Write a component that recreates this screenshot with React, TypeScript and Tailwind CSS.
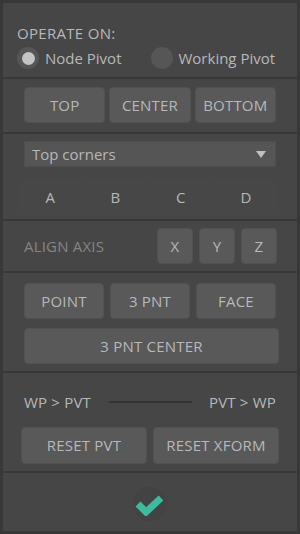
import React from "react";

function Btn({ label, className = "" }: { label: string; className?: string }) {
  return (
    <div
      className={`flex items-center justify-center rounded-[4px] bg-[#595959] border border-[#515151] text-[15px] text-[#b6b8ba] tracking-[0.2px] ${className}`}
    >
      {label}
    </div>
  );
}

function Radio({ label, checked }: { label: string; checked?: boolean }) {
  return (
    <div className="flex items-center gap-[6px]">
      <div className="w-[22px] h-[22px] rounded-full bg-[#565656] flex items-center justify-center">
        {checked && <div className="w-[13px] h-[13px] rounded-full bg-[#c4c4c4]" />}
      </div>
      <span className="text-[15px] text-[#b6b8ba]">{label}</span>
    </div>
  );
}

export default function App() {
  return (
    <div
      className="w-[300px] h-[534px] bg-[#383838] p-[3px] flex flex-col gap-[2px] select-none"
      style={{ fontFamily: '"Open Sans", "Liberation Sans", sans-serif' }}
    >
      {/* operate on */}
      <div className="h-[74px] bg-[#464646] px-[14px] pt-[20px]">
        <div className="text-[15px] leading-[20px] text-[#b6b8ba] tracking-[0.3px]">OPERATE ON:</div>
        <div className="flex items-center gap-[29px] mt-[4px]">
          <Radio label="Node Pivot" checked />
          <Radio label="Working Pivot" />
        </div>
      </div>

      {/* top/center/bottom */}
      <div className="h-[53px] bg-[#464646] px-[21px] pt-[8px] flex gap-[4px]">
        <Btn label="TOP" className="w-[82px] h-[36px]" />
        <Btn label="CENTER" className="w-[82px] h-[36px]" />
        <Btn label="BOTTOM" className="w-[82px] h-[36px]" />
      </div>

      {/* corners */}
      <div className="h-[85px] bg-[#464646] px-[21px] pt-[7px]">
        <div className="h-[26px] bg-[#555555] border border-[#4e4e4e] flex items-center justify-between pl-[7px] pr-[9px]">
          <span className="text-[15px] text-[#b6b8ba]">Top corners</span>
          <svg width="10" height="7" viewBox="0 0 10 7">
            <polygon points="0,0 10,0 5,7" fill="#c0c0c0" />
          </svg>
        </div>
        <div className="grid grid-cols-4 mt-[12px] w-[260px] -ml-[6px] gap-[1px]">
          {["A", "B", "C", "D"].map((l) => (
            <div key={l} className="h-[36px] flex items-center justify-center text-[15px] text-[#b6b8ba] bg-[#474747]">
              {l}
            </div>
          ))}
        </div>
      </div>

      {/* align axis */}
      <div className="h-[50px] bg-[#464646] pl-[21px] pr-[20px] flex items-center justify-between">
        <span className="text-[15px] text-[#858585] tracking-[0.2px]">ALIGN AXIS</span>
        <div className="flex gap-[6px]">
          <Btn label="X" className="w-[36px] h-[36px]" />
          <Btn label="Y" className="w-[36px] h-[36px]" />
          <Btn label="Z" className="w-[36px] h-[36px]" />
        </div>
      </div>

      {/* point modes */}
      <div className="h-[98px] bg-[#464646] px-[21px] pt-[10px] flex flex-col gap-[9px]">
        <div className="flex gap-[6px]">
          <Btn label="POINT" className="w-[81px] h-[36px]" />
          <Btn label="3 PNT" className="w-[81px] h-[36px]" />
          <Btn label="FACE" className="w-[81px] h-[36px]" />
        </div>
        <Btn label="3 PNT CENTER" className="w-[255px] h-[36px]" />
      </div>

      {/* wp / pvt */}
      <div className="h-[98px] bg-[#464646] px-[18px] pt-[18px]">
        <div className="flex items-center justify-between pl-[3px] pr-[3px] h-[22px]">
          <span className="text-[15px] text-[#b6b8ba] tracking-[0.2px]">WP &gt; PVT</span>
          <div className="w-[83px] h-[2px] bg-[#343434]" />
          <span className="text-[15px] text-[#b6b8ba] tracking-[0.2px]">PVT &gt; WP</span>
        </div>
        <div className="flex gap-[6px] mt-[14px]">
          <Btn label="RESET PVT" className="w-[127px] h-[37px]" />
          <Btn label="RESET XFORM" className="w-[127px] h-[37px]" />
        </div>
      </div>

      {/* confirm */}
      <div className="flex-1 bg-[#464646] flex items-center justify-center">
        <div className="w-[34px] h-[34px] rounded-full bg-[#434343] flex items-center justify-center mt-[4px]">
          <svg width="30" height="24" viewBox="0 0 30 24">
            <polyline points="3,12 11,20 26,6" fill="none" stroke="#3dbb9f" strokeWidth="7" strokeLinejoin="miter" />
          </svg>
        </div>
      </div>
    </div>
  );
}
